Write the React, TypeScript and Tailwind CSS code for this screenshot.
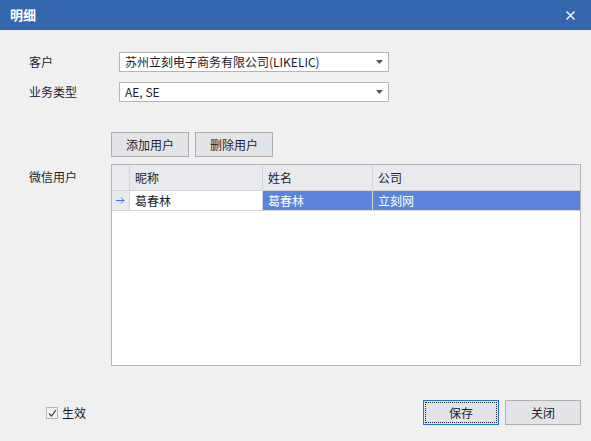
import { FC } from "react";

const font = { fontFamily: '"Noto Sans CJK SC", "Noto Sans", sans-serif' };

const Combo: FC<{ value: string }> = ({ value }) => (
  <div className="flex h-[20px] w-[270px] items-center justify-between border border-[#b4b4b4] bg-white pl-[5px] pr-[5px] text-[12px] text-[#1c1c2c]">
    <span className="leading-none">{value}</span>
    <svg width="7" height="4" viewBox="0 0 7 4">
      <path d="M0 0h7L3.5 4z" fill="#555" />
    </svg>
  </div>
);

const Btn: FC<{ label: string; className?: string }> = ({ label, className }) => (
  <button
    className={`flex h-[25px] w-[78px] items-center justify-center border border-[#adadad] bg-[#e3e4e7] text-[12px] text-[#1c1c2c] ${className ?? ""}`}
  >
    {label}
  </button>
);

export default function App() {
  return (
    <div className="flex h-[441px] w-[591px] flex-col bg-[#f0f0f0]" style={font}>
      {/* title */}
      <div className="flex h-[30px] shrink-0 items-center justify-between bg-[#3467ae] pl-[10px] pr-[16px]">
        <span className="text-[13px] font-bold text-white">明细</span>
        <svg width="9" height="9" viewBox="0 0 9 9">
          <path d="M0.5 0.5L8.5 8.5M8.5 0.5L0.5 8.5" stroke="#fff" strokeWidth="1.4" />
        </svg>
      </div>

      <div className="flex flex-1 flex-col pl-[29px] pr-[10px] pt-[22px] text-[12px] text-[#1c1c2c]">
        <div className="flex items-center">
          <span className="w-[90px]">客户</span>
          <Combo value="苏州立刻电子商务有限公司(LIKELIC)" />
        </div>
        <div className="mt-[10px] flex items-center">
          <span className="w-[90px]">业务类型</span>
          <Combo value="AE, SE" />
        </div>

        <div className="ml-[82px] mt-[30px] flex gap-[6px]">
          <Btn label="添加用户" />
          <Btn label="删除用户" />
        </div>

        <div className="mt-[7px] flex">
          <span className="w-[82px] pt-[4px]">微信用户</span>
          <div className="flex h-[202px] w-[470px] flex-col border border-[#b4b4b4] bg-white">
            <div className="flex h-[26px] shrink-0 border-b border-[#d4d4d4] bg-[#e9eaed]">
              <div className="w-[18px] border-r border-[#d4d4d4]" />
              <div className="flex w-[133px] items-center border-r border-[#d4d4d4] pl-[5px]">昵称</div>
              <div className="flex w-[110px] items-center border-r border-[#d4d4d4] pl-[5px]">姓名</div>
              <div className="flex flex-1 items-center pl-[5px]">公司</div>
            </div>
            <div className="flex h-[20px] shrink-0 border-b border-[#d4d4d4]">
              <div className="flex w-[18px] items-center justify-center border-r border-[#d4d4d4] bg-[#e9eaed]">
                <svg width="9" height="7" viewBox="0 0 9 7">
                  <path d="M0 3.5h8M5 0.5l3 3-3 3" stroke="#3a78d8" strokeWidth="1" fill="none" />
                </svg>
              </div>
              <div className="flex w-[133px] items-center border-r border-[#d4d4d4] pl-[5px]">葛春林</div>
              <div className="flex w-[110px] items-center border-r border-[#d4d4d4] bg-[#5b84dd] pl-[5px] text-white">
                葛春林
              </div>
              <div className="flex flex-1 items-center bg-[#5b84dd] pl-[5px] text-white">立刻网</div>
            </div>
          </div>
        </div>

        <div className="mt-[34px] flex items-center">
          <div className="ml-[17px] flex items-center gap-[4px]">
            <div className="flex h-[12px] w-[12px] items-center justify-center border border-[#b4b4b4] bg-[#f4f4f4]">
              <svg width="9" height="8" viewBox="0 0 9 8">
                <path d="M1 4.5l2.5 2.5L8 1" stroke="#3c3c4c" strokeWidth="1.2" fill="none" />
              </svg>
            </div>
            <span>生效</span>
          </div>
          <div className="ml-auto flex gap-[6px]">
            <button className="flex h-[25px] w-[76px] items-center justify-center border border-[#1f73e0] bg-[#e3e4e7] p-[1px]">
              <span className="flex h-full w-full items-center justify-center border border-dotted border-[#222]">
                保存
              </span>
            </button>
            <button className="flex h-[25px] w-[76px] items-center justify-center border border-[#b0b0b0] bg-[#e3e4e7]">
              关闭
            </button>
          </div>
        </div>
      </div>
    </div>
  );
}
